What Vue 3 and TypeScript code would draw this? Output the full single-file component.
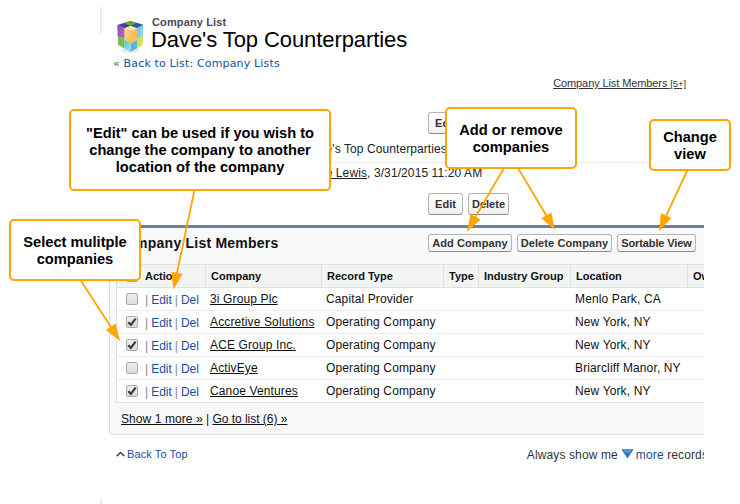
<script setup lang="ts">
interface Row { company: string; type: string; location: string; checked: boolean }
interface Callout { id: string; lines: string[] }
interface Arrow { x1: number; y1: number; x2: number; y2: number }

const rows: Row[] = [
  { company: '3i Group Plc', type: 'Capital Provider', location: 'Menlo Park, CA', checked: false },
  { company: 'Accretive Solutions', type: 'Operating Company', location: 'New York, NY', checked: true },
  { company: 'ACE Group Inc.', type: 'Operating Company', location: 'New York, NY', checked: true },
  { company: 'ActivEye', type: 'Operating Company', location: 'Briarcliff Manor, NY', checked: false },
  { company: 'Canoe Ventures', type: 'Operating Company', location: 'New York, NY', checked: true },
]
const headings: string[] = ['Company', 'Record Type', 'Type', 'Industry Group', 'Location', 'Owner']

const callouts: Callout[] = [
  { id: 'edit', lines: ['"Edit" can be used if you wish to', 'change the company to another', 'location of the company'] },
  { id: 'select', lines: ['Select mulitple', 'companies'] },
  { id: 'add', lines: ['Add or remove', 'companies'] },
  { id: 'view', lines: ['Change', 'view'] },
]
const arrows: Arrow[] = [
  { x1: 194.5, y1: 190, x2: 173.5, y2: 289.5 },
  { x1: 80.5, y1: 280, x2: 120, y2: 341 },
  { x1: 504, y1: 168, x2: 467, y2: 231.5 },
  { x1: 518, y1: 168, x2: 555, y2: 230 },
  { x1: 687.5, y1: 170, x2: 659, y2: 231 },
]

// Triangle with its point on the arrow's end
function head(a: Arrow): string {
  const d = Math.hypot(a.x2 - a.x1, a.y2 - a.y1)
  const ux = (a.x2 - a.x1) / d
  const uy = (a.y2 - a.y1) / d
  const bx = a.x2 - ux * 17
  const by = a.y2 - uy * 17
  return `${a.x2},${a.y2} ${bx - uy * 5.8},${by + ux * 5.8} ${bx + uy * 5.8},${by - ux * 5.8}`
}
</script>

<template>
  <div class="page">
    <div class="sheet">
      <header class="top">
        <svg class="logo" width="30" height="34" viewBox="0 0 30 34">
          <defs>
            <linearGradient id="purple" x1="0" y1="0" x2="1" y2="1"><stop offset="0" stop-color="#8a45b0" /><stop offset="1" stop-color="#a878cc" /></linearGradient>
            <linearGradient id="cyan" x1="0" y1="0" x2="1" y2="1"><stop offset="0" stop-color="#57b9dc" /><stop offset="1" stop-color="#a5e2ee" /></linearGradient>
            <linearGradient id="gold" x1="0" y1="0" x2="1" y2="1"><stop offset="0" stop-color="#ffdc83" /><stop offset="1" stop-color="#f9bd4e" /></linearGradient>
          </defs>
          <ellipse cx="15.5" cy="31.5" rx="9" ry="2" fill="#e4e6e8" />
          <path d="M15.5 2 28.3 6 15.5 12 2.3 6Z" fill="#4a3a98" />
          <path d="M15.5 2 22 4 15.5 7 9 4Z" fill="#5fad28" />
          <path d="M22 4 28.3 6 22 9 15.5 7Z" fill="#2459be" />
          <path d="M2.3 6 10 9V20L2.7 17.5Z" fill="url(#purple)" />
          <path d="M28.3 6 21.5 9V20L28 17.5Z" fill="url(#cyan)" />
          <path d="M2.7 17.5 9.5 19.5V29.6L3.2 26Z" fill="#7cc04b" />
          <path d="M9.5 18 15.5 20.5V33L9.5 29.6Z" fill="url(#cyan)" />
          <path d="M15.5 20.5 22 18V29.4L15.5 33Z" fill="#58b8d6" />
          <path d="M22 19.5 28 17.5 27.5 26 22 29.4Z" fill="#d9df52" />
          <path d="M9.3 9.2 15.5 6.8 22.2 9.2 16 12Z" fill="#ffe9a6" />
          <path d="M9.3 9.2 16 12V24.5L9.5 21Z" fill="url(#gold)" />
          <path d="M22.2 9.2 16 12V24.5L22 21Z" fill="#f9c258" />
        </svg>
        <div class="titles">
          <div class="kind">Company List</div>
          <h1>Dave's Top Counterparties</h1>
        </div>
      </header>
      <div class="crumb"><span>«</span> <a>Back to List: Company Lists</a></div>
      <div class="jump"><a>Company List Members <small>[5+]</small></a></div>

      <div class="buttons first"><button class="big">Edit</button><button class="big">Delete</button></div>
      <div class="detail name">Dave's Top Counterparties</div>
      <div class="detail owner"><a>Dave Lewis</a>, 3/31/2015 11:20 AM</div>
      <div class="buttons second"><button class="big">Edit</button><button class="big">Delete</button></div>

      <section class="panel">
        <div class="panelhead">
          <h2>Company List Members</h2>
          <div class="actions">
            <button class="add">Add Company</button><button class="del">Delete Company</button><button class="sort">Sortable View</button>
          </div>
        </div>
        <div class="table">
          <div class="row headrow">
            <div class="cell act"><span class="check"></span><span>Action</span></div>
            <div v-for="h in headings" :key="h" class="cell">{{ h }}</div>
          </div>
          <div v-for="r in rows" :key="r.company" class="row">
            <div class="cell act">
              <span class="check">
                <svg v-if="r.checked" width="10" height="10" viewBox="0 0 10 10"><path d="M1.3 5.2 3.9 7.8 8.6 1.6" fill="none" stroke="#3c3c3c" stroke-width="2.2" /></svg>
              </span>
              <span class="links"><i>|</i><a>Edit</a><i>|</i><a>Del</a></span>
            </div>
            <div class="cell"><a class="under">{{ r.company }}</a></div>
            <div class="cell">{{ r.type }}</div>
            <div class="cell"></div>
            <div class="cell"></div>
            <div class="cell">{{ r.location }}</div>
            <div class="cell"></div>
          </div>
        </div>
        <div class="more"><a class="under">Show 1 more »</a> | <a class="under">Go to list (6) »</a></div>
      </section>

      <footer>
        <a class="back">
          <svg width="9" height="6" viewBox="0 0 9 6"><path d="M.7 5.1 4.5 1.5 8.3 5.1" fill="none" stroke="#444" stroke-width="1.5" /></svg>
          <span>Back To Top</span>
        </a>
        <div class="always">
          <span>Always show me</span>
          <svg width="13" height="10" viewBox="0 0 13 10"><path d="M.3.3H12.7L6.5 9.5Z" fill="#3474c4" /><path d="M2.5 1.2H10.5L9 3.5H4Z" fill="#5b98dc" /></svg>
          <span><a>more</a> records</span>
        </div>
      </footer>
    </div>

    <div class="edge upper"></div>
    <div class="edge lower"></div>

    <svg class="arrows" width="740" height="504">
      <g v-for="(a, i) in arrows" :key="i">
        <line :x1="a.x1" :y1="a.y1" :x2="a.x2 - (a.x2 - a.x1) * 0.12" :y2="a.y2 - (a.y2 - a.y1) * 0.12" stroke="#ffa500" stroke-width="1.8" />
        <polygon :points="head(a)" fill="#ffa500" />
      </g>
    </svg>
    <div v-for="c in callouts" :key="c.id" class="callout" :class="c.id">
      <div v-for="l in c.lines" :key="l">{{ l }}</div>
    </div>
  </div>
</template>

<style>
body { margin: 0; background: #fff; }
</style>
<style scoped>
* { box-sizing: border-box; }
.page {
  position: relative;
  width: 740px;
  height: 504px;
  overflow: hidden;
  background: #fff;
  color: #111;
  font: 12px/14px "Liberation Sans", Arial, sans-serif;
  letter-spacing: 0.13px;
}
.sheet { width: 704px; height: 504px; padding-left: 109px; overflow: hidden; }
a { color: #15509b; }
h1, h2 { margin: 0; }
.top { display: flex; height: 53px; padding: 16px 0 0 6px; }
.logo { margin-top: 3px; flex: none; }
.titles { padding-left: 6px; white-space: nowrap; }
.kind { font-size: 11px; line-height: 12px; font-weight: bold; color: #4a4a56; letter-spacing: 0.12px; padding-left: 1px; }
h1 { font-size: 22px; line-height: 24px; font-weight: normal; color: #000; letter-spacing: -0.08px; }
.crumb { height: 20px; padding: 4px 0 0 4px; font: 11px/14px "DejaVu Sans", Verdana, sans-serif; color: #555; letter-spacing: 0.16px; }
.jump { height: 39px; padding: 3px 18px 0 0; text-align: right; font-size: 11px; letter-spacing: -0.1px; }
.jump a { color: #333; text-decoration: underline; }
.jump small { font-size: 9.5px; }
.buttons { display: flex; gap: 5px; padding-left: 319px; }
.first { height: 30px; }
.second { height: 32px; }
button {
  height: 18px;
  padding: 0;
  border: 1px solid #b5b5b5;
  border-bottom-color: #8b8b8b;
  border-radius: 3px;
  background: linear-gradient(#fff, #f0f0f0);
  font: bold 11px/15px "Liberation Sans", Arial, sans-serif;
  color: #333;
  letter-spacing: 0.1px;
  white-space: nowrap;
}
button.add { width: 84px; }
button.del { width: 95px; }
button.sort { width: 79px; letter-spacing: -0.12px; }
button.big { height: 22px; line-height: 19px; width: 35px; letter-spacing: 0; }
button.big + button.big { width: 41px; }
.detail { white-space: nowrap; color: #222; }
.name { height: 21px; border-bottom: 1px solid #ececec; padding-left: 195px; letter-spacing: 0.08px; }
.owner { height: 30px; padding: 3px 0 0 195px; color: #222; letter-spacing: 0.1px; }
.owner a { color: #222; text-decoration: underline; }
.panel {
  height: 210px;
  margin-right: -10px;
  border: 1px solid #d9dce0;
  border-top: 3px solid #747e96;
  border-radius: 4px;
  background: #f8f8f8;
}
.panelhead { display: flex; height: 36px; padding: 6px 0 0 6px; }
h2 { width: 312px; font-size: 14px; line-height: 18px; color: #111; letter-spacing: 0.23px; white-space: nowrap; }
.actions { display: flex; gap: 5px; }
.table { margin-left: 6px; border: 1px solid #dfe1e4; background: #fff; }
.row { display: grid; grid-template-columns: 88px 116px 122px 35px 92px 117px 1fr; height: 23px; border-bottom: 1px solid #ececec; }
.row:last-child { height: 22px; border: 0; }
.cell { padding-left: 5px; line-height: 22px; white-space: nowrap; overflow: hidden; }
.headrow { background: #f2f3f3; font-size: 11px; font-weight: bold; letter-spacing: 0; border-color: #dfe1e4; }
.headrow .cell { border-left: 1px solid #dfe1e4; }
.headrow .act { border-left: 0; }
.act { display: flex; align-items: center; padding-left: 9px; gap: 7px; }
.check {
  width: 12px;
  height: 12px;
  flex: none;
  border: 1px solid #a9a9a9;
  border-radius: 2px;
  background: linear-gradient(#eee, #dcdcdc);
  line-height: 0;
}
.links { display: flex; padding-top: 1px; letter-spacing: 0; }
.links a + i { padding-left: 3px; }
.links i { padding-right: 3px; font-style: normal; color: #888; }
.under { color: #111; text-decoration: underline; }
.more { padding: 9px 0 0 11px; letter-spacing: -0.03px; }
.more .under:first-child { letter-spacing: 0.08px; }
footer { display: flex; justify-content: space-between; padding: 12px 0 0 7px; color: #333; white-space: nowrap; }
.back { display: flex; gap: 2px; font-size: 11px; align-items: center; letter-spacing: 0.1px; height: 14px; }
.always { display: flex; gap: 2px; margin-right: -4px; padding-top: 1px; letter-spacing: 0.12px; }
.always svg { margin-top: 1px; margin-left: 1px; }
.edge { position: absolute; left: 100px; width: 2px; background: #ebebeb; }
.upper { top: 7px; height: 27px; }
.lower { top: 498px; height: 6px; }
.arrows { position: absolute; left: 0; top: 0; }
.callout {
  position: absolute;
  display: flex;
  flex-direction: column;
  justify-content: center;
  border: 2px solid #ffa500;
  border-radius: 5px;
  background: #fff;
  color: #000;
  font-size: 14.67px;
  line-height: 17px;
  font-weight: bold;
  text-align: center;
  letter-spacing: 0;
  white-space: nowrap;
}
.callout.edit { left: 69px; top: 109px; width: 262px; height: 82px; padding-top: 1px; }
.callout.select { left: 9px; top: 219px; width: 132px; height: 62px; padding-top: 1px; }
.callout.add { left: 445px; top: 107px; width: 132px; height: 62px; padding-top: 1px; }
.callout.view { left: 649px; top: 119px; width: 82px; height: 52px; padding-top: 1px; }
</style>
